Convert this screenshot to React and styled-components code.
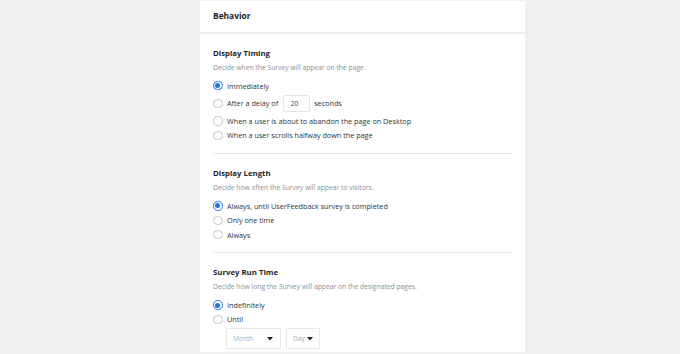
import React from 'react'
import styled, { createGlobalStyle } from 'styled-components'

const Global = createGlobalStyle`
    html, body {
        margin: 0;
        padding: 0;
        background: #f0f0f1;
        font-family: "Open Sans", "Noto Sans", sans-serif;
    }
`

const Page = styled.div`
    padding-left: 200px;
    padding-top: 1px;
    padding-bottom: 2px;
`

const Card = styled.div`
    width: 325px;
    background: #fff;
`

const Header = styled.div`
    box-sizing: border-box;
    height: 33px;
    display: flex;
    align-items: center;
    padding: 0 13px 2px;
    border-bottom: 2px solid #ececec;
    font-size: 8.4px;
    font-weight: 700;
    color: #1d2327;
`

const Body = styled.div`
    padding: 0 13px;
`

const Section = styled.div`
    padding: 11.5px 0 ${p => p.$last ? '3px' : '10.5px'};
    border-bottom: ${p => p.$last ? 'none' : '1px solid #e8e8e8'};
`

const Title = styled.div`
    font-size: 7.8px;
    line-height: 14px;
    font-weight: 700;
    color: #1d2327;
`

const Desc = styled.div`
    margin-top: 2px;
    font-size: 6.75px;
    line-height: 12px;
    color: #8c8f94;
`

const Options = styled.div`
    margin-top: 5px;
    display: flex;
    flex-direction: column;
`

const Row = styled.label`
    display: flex;
    align-items: center;
    height: ${p => p.$tall ? '21px' : '14.4px'};
    font-size: 7.25px;
    color: #2c3338;
    gap: 4.5px;
`

const Radio = styled.span`
    box-sizing: border-box;
    width: 9.5px;
    height: 9.5px;
    border-radius: 50%;
    border: 1px solid ${p => p.$on ? '#2271e8' : '#c3c4c7'};
    display: flex;
    align-items: center;
    justify-content: center;
    flex-shrink: 0;
    &::after {
        content: '';
        width: 5px;
        height: 5px;
        border-radius: 50%;
        background: ${p => p.$on ? '#2271e8' : 'transparent'};
    }
`

const NumberBox = styled.div`
    box-sizing: border-box;
    width: 27px;
    height: 17.4px;
    border: 1px solid #e2e4e7;
    border-radius: 2px;
    display: flex;
    align-items: center;
    padding-left: 7px;
    font-size: 6.6px;
    color: #3c434a;
`

const Selects = styled.div`
    display: flex;
    gap: 5px;
    margin: 1.5px 0 0 13px;
`

const Select = styled.div`
    box-sizing: border-box;
    width: ${p => p.$w}px;
    height: 21px;
    border: 1px solid #e8e8e8;
    border-radius: 1px;
    display: flex;
    align-items: center;
    justify-content: space-between;
    padding: 0 ${p => p.$pr}px 0 6px;
    font-size: 6.6px;
    color: #a7aaad;
`

const Caret = () => (
    <svg width="6" height="4" viewBox="0 0 6 4">
        <path d="M0 0 L6 0 L3 3.5 Z" fill="#1d2327" />
    </svg>
)

const Option = ({ on, children, tall }) => (
    <Row $tall={tall}>
        <Radio $on={on} />
        {children}
    </Row>
)

export default function App() {
    return (
        <Page>
            <Global />
            <Card>
                <Header>Behavior</Header>
                <Body>
                    <Section>
                        <Title>Display Timing</Title>
                        <Desc>Decide when the Survey will appear on the page.</Desc>
                        <Options>
                            <Option on>Immediately</Option>
                            <Option tall>
                                <span>After a delay of</span>
                                <NumberBox>20</NumberBox>
                                <span>seconds</span>
                            </Option>
                            <Option>When a user is about to abandon the page on Desktop</Option>
                            <Option>When a user scrolls halfway down the page</Option>
                        </Options>
                    </Section>
                    <Section>
                        <Title>Display Length</Title>
                        <Desc>Decide how often the Survey will appear to visitors.</Desc>
                        <Options>
                            <Option on>Always, until UserFeedback survey is completed</Option>
                            <Option>Only one time</Option>
                            <Option>Always</Option>
                        </Options>
                    </Section>
                    <Section $last>
                        <Title>Survey Run Time</Title>
                        <Desc>Decide how long the Survey will appear on the designated pages.</Desc>
                        <Options>
                            <Option on>Indefinitely</Option>
                            <Option>Until</Option>
                        </Options>
                        <Selects>
                            <Select $w={55} $pr={7}>Month <Caret /></Select>
                            <Select $w={34} $pr={6}>Day <Caret /></Select>
                        </Selects>
                    </Section>
                </Body>
            </Card>
        </Page>
    )
}
